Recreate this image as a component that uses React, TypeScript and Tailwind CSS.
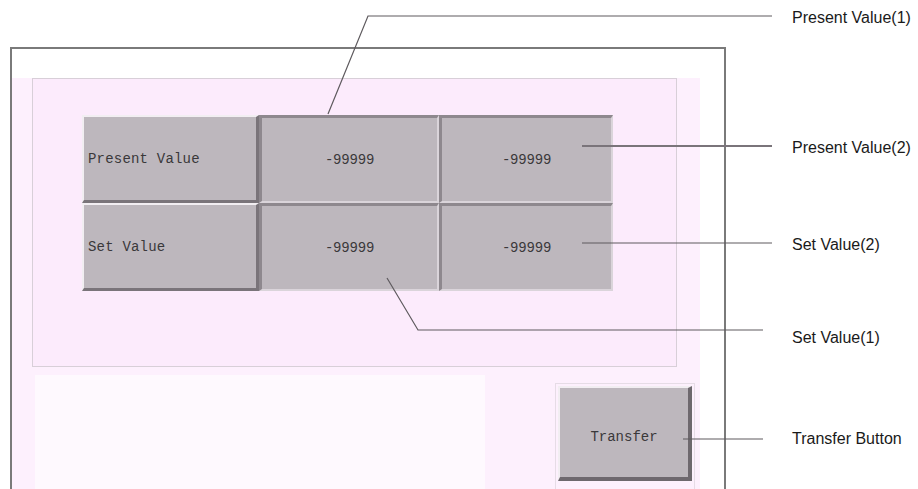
import React from 'react';

// Raised / sunken cells of the panel screen
const LabelCell: React.FC<{ text: string }> = ({ text }) => (
  <div className="flex items-center pl-[4px] pt-[2px] bg-[#bdb7bd] border-t-2 border-l-2 border-t-[#f2eef2] border-l-[#f2eef2] border-b-[3px] border-r-[3px] border-b-[#7a747a] border-r-[#7a747a]">
    <span className="text-[14px] tracking-[0.2px] text-[#3a383a]">{text}</span>
  </div>
);

const ValueCell: React.FC<{ text: string }> = ({ text }) => (
  <div className="flex items-center justify-center pt-[2px] bg-[#bdb7bd] border-t-[3px] border-l-[3px] border-t-[#8e888e] border-l-[#8e888e] border-b-2 border-r-2 border-b-[#dad4da] border-r-[#dad4da]">
    <span className="text-[14px] tracking-[-0.2px] text-[#3a383a]">{text}</span>
  </div>
);

const callouts = [
  { label: 'Present Value(1)', top: 9 },
  { label: 'Present Value(2)', top: 139 },
  { label: 'Set Value(2)', top: 236 },
  { label: 'Set Value(1)', top: 329 },
  { label: 'Transfer Button', top: 430 },
];

const App: React.FC = () => {
  return (
    <div className="relative w-[918px] h-[489px] overflow-hidden bg-white">
      {/* screen frame */}
      <div className="ml-[10px] mt-[47px] w-[716px] h-[460px] border-t-2 border-l-2 border-r-2 border-[#7a7a7a] pt-[29px] font-['Liberation_Mono',monospace]">
        <div className="w-[688px] h-[420px] bg-[#fdf0fd] pl-[20px]">
          {/* data panel */}
          <div className="w-[645px] h-[289px] border border-[#d8cfd8] bg-[#fcebfc] pt-[36px] pl-[49px]">
            <div className="grid grid-cols-[177px_180px_174px] grid-rows-[88px_88px]">
              <LabelCell text="Present Value" />
              <ValueCell text="-99999" />
              <ValueCell text="-99999" />
              <LabelCell text="Set Value" />
              <ValueCell text="-99999" />
              <ValueCell text="-99999" />
            </div>
          </div>
          <div className="flex">
            <div className="ml-[3px] mt-[8px] w-[450px] h-[120px] bg-[#fef9fe]" />
            <div className="ml-[70px] mt-[16px] p-[2px] border border-[#e6dce6]">
              <div className="flex items-center justify-center w-[134px] h-[95px] pt-[10px] bg-[#bdb7bd] border-t-2 border-l-2 border-t-[#f2eef2] border-l-[#f2eef2] border-b-4 border-r-4 border-b-[#6e686e] border-r-[#6e686e]">
                <span className="text-[14px] tracking-[0px] text-[#3a383a]">Transfer</span>
              </div>
            </div>
          </div>
        </div>
      </div>

      {/* leader lines */}
      <svg className="absolute inset-0 pointer-events-none" width="918" height="489">
        <g stroke="#5e5a5e" strokeWidth="1.2" fill="none">
          <polyline points="328,114 368,16 772,16" />
          <line x1="582" y1="146" x2="772" y2="146" strokeWidth="2" stroke="#7a747a" />
          <line x1="582" y1="243" x2="772" y2="243" />
          <polyline points="387,278 418,330 763,330" />
          <line x1="683" y1="439" x2="763" y2="439" />
        </g>
      </svg>

      {callouts.map((c) => (
        <div
          key={c.label}
          className="absolute left-[792px] text-[16px] leading-[18px] text-[#1a1a1a] font-['Liberation_Sans',Arial,sans-serif]"
          style={{ top: c.top }}
        >
          {c.label}
        </div>
      ))}
    </div>
  );
};

export default App;
